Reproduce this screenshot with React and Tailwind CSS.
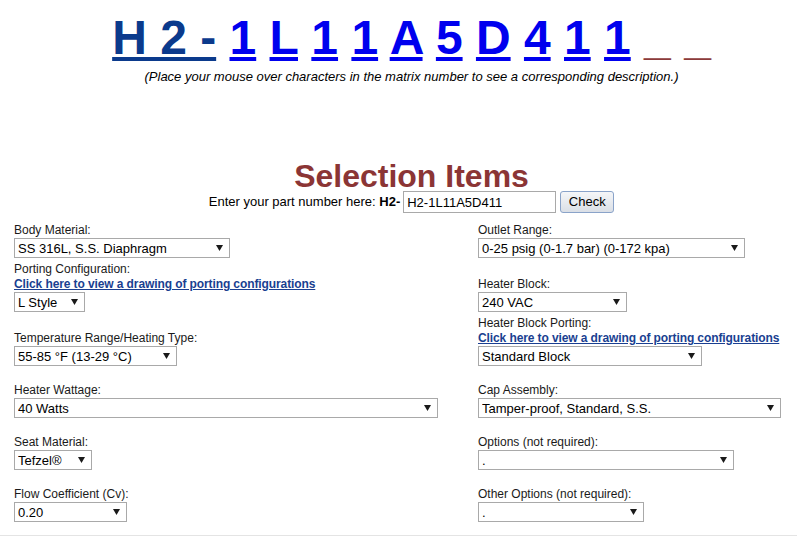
import { Fragment } from 'react';

const matrix = ['1', 'L', '1', '1', 'A', '5', 'D', '4', '1', '1'];

const rows = [
  {
    gap: 'mt-0',
    left: { label: 'Body Material:', value: 'SS 316L, S.S. Diaphragm', w: 'w-[216px]' },
    right: { label: 'Outlet Range:', value: '0-25 psig (0-1.7 bar) (0-172 kpa)', w: 'w-[267px]' },
  },
  {
    gap: 'mt-[4px]',
    left: { label: 'Porting Configuration:', link: true, value: 'L Style', w: 'w-[71px]' },
    right: { label: 'Heater Block:', value: '240 VAC', w: 'w-[149px]' },
  },
  {
    gap: 'mt-[4px]',
    left: { label: 'Temperature Range/Heating Type:', value: '55-85 °F (13-29 °C)', w: 'w-[163px]' },
    right: { label: 'Heater Block Porting:', link: true, value: 'Standard Block', w: 'w-[224px]' },
  },
  {
    gap: 'mt-[17px]',
    left: { label: 'Heater Wattage:', value: '40 Watts', w: 'w-[424px]' },
    right: { label: 'Cap Assembly:', value: 'Tamper-proof, Standard, S.S.', w: 'w-[303px]' },
  },
  {
    gap: 'mt-[17px]',
    left: { label: 'Seat Material:', value: 'Tefzel®', w: 'w-[78px]' },
    right: { label: 'Options (not required):', value: '.', w: 'w-[256px]' },
  },
  {
    gap: 'mt-[17px]',
    left: { label: 'Flow Coefficient (Cv):', value: '0.20', w: 'w-[113px]' },
    right: { label: 'Other Options (not required):', value: '.', w: 'w-[166px]' },
  },
];

function Select({ value, w }) {
  return (
    <div className={`relative h-[20px] ${w}`}>
      <select className="block h-full w-full appearance-none rounded-none border border-[#a9a9a9] bg-white pl-[3px] text-[13px] text-black outline-none">
        <option>{value}</option>
      </select>
      <svg
        className="pointer-events-none absolute right-[7px] top-[7px]"
        width="7"
        height="6"
        viewBox="0 0 7 6"
      >
        <path d="M0 0H7L3.5 6Z" fill="#1a1a1a" />
      </svg>
    </div>
  );
}

function Field({ label, link, value, w }) {
  return (
    <div className="flex flex-col items-start">
      <span className="text-[12px] leading-[15px] text-[#1a1a1a]">{label}</span>
      {link && (
        <a
          href="#"
          className="text-[12px] font-bold leading-[15px] tracking-[-0.1px] text-[#1a3f91] underline"
        >
          Click here to view a drawing of porting configurations
        </a>
      )}
      <Select value={value} w={w} />
    </div>
  );
}

export default function App() {
  return (
    <div className="min-h-[536px] bg-white font-['Liberation_Sans',Arial,sans-serif] text-black">
      <div className="pl-[26px] text-center">
        <div className="pt-[10px] text-[48px] font-bold leading-[56px]">
          <a href="#" className="text-[#0b3a8c] underline">
            H 2 -
          </a>
          {matrix.map((c, i) => (
            <Fragment key={i}>
              {' '}
              <a href="#" className="text-[#0000ee] underline">
                {c}
              </a>
            </Fragment>
          ))}{' '}
          <span className="text-[#8b3a3a]">_</span> <span className="text-[#8b3a3a]">_</span>
        </div>
        <p className="mt-[3px] text-[13px] italic leading-[15px]">
          (Place your mouse over characters in the matrix number to see a corresponding description.)
        </p>

        <h2 className="mt-[79px] text-[32px] font-bold leading-[27px] text-[#8b3535]">
          Selection Items
        </h2>
        <div className="mt-[1px] flex h-[22px] items-center justify-center text-[13px]">
          <span>Enter your part number here:&nbsp;</span>
          <b>H2-</b>
          <input
            className="ml-[3px] h-[22px] w-[153px] border border-[#a9a9a9] px-[3px] text-[13px] outline-none"
            defaultValue="H2-1L11A5D411"
          />
          <button className="ml-[4px] h-[22px] w-[54px] rounded-[3px] border border-[#8aa3c9] bg-linear-to-b from-[#f5f6f8] to-[#dadfe6] text-[13px]">
            Check
          </button>
        </div>
      </div>

      <div className="mt-[10px] pl-[14px]">
        {rows.map((r, i) => (
          <div key={i} className={`grid grid-cols-[464px_1fr] items-end ${r.gap}`}>
            <Field {...r.left} />
            <Field {...r.right} />
          </div>
        ))}
      </div>

      <div className="mt-[13px] h-[2px] bg-[#e4e4e4]" />
    </div>
  );
}
